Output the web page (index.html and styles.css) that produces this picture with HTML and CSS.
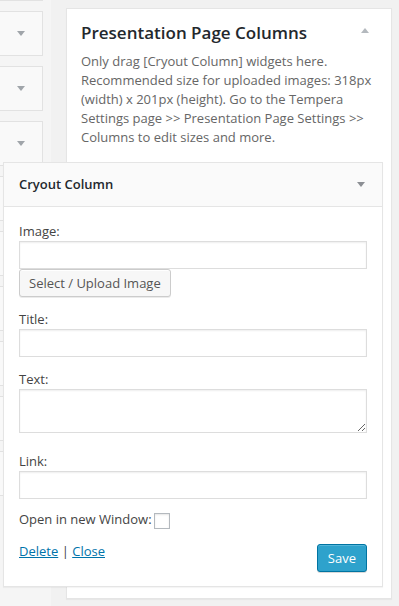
FILE: index.html
```html
<!DOCTYPE html>
<html>
<head>
<meta charset="utf-8">
<link rel="stylesheet" href="styles.css">
</head>
<body>
<div class="screen">
  <div class="left-col">
    <div class="side-box"><span class="arrow-down"></span></div>
    <div class="side-box"><span class="arrow-down"></span></div>
    <div class="side-box"><span class="arrow-down"></span></div>
    <div class="side-box"><span class="arrow-down"></span></div>
    <div class="side-box"></div>
    <div class="side-box"></div>
    <div class="side-box"></div>
    <div class="side-box"></div>
    <div class="side-box"></div>
    <div class="side-box"></div>
  </div>
  <div class="holder">
    <div class="holder-head">
      <h3 class="holder-title">Presentation Page Columns</h3>
      <span class="arrow-up"></span>
    </div>
    <p class="holder-desc">Only drag [Cryout Column] widgets here.<br>Recommended size for uploaded images: 318px<br>(width) x 201px (height). Go to the Tempera<br>Settings page &gt;&gt; Presentation Page Settings &gt;&gt;<br>Columns to edit sizes and more.</p>
  </div>

  <div class="widget">
    <div class="widget-top">
      <span class="widget-title">Cryout Column</span>
      <span class="arrow-down dark"></span>
    </div>
    <div class="widget-inside">
      <div class="field first">
        <label class="lbl">Image:</label>
        <input class="inp" type="text">
        <button class="btn" type="button">Select / Upload Image</button>
      </div>
      <div class="field">
        <label class="lbl">Title:</label>
        <input class="inp" type="text">
      </div>
      <div class="field">
        <label class="lbl">Text:</label>
        <textarea class="inp area"></textarea>
      </div>
      <div class="field link-field">
        <label class="lbl">Link:</label>
        <input class="inp" type="text">
      </div>
      <div class="check-row">
        <span class="lbl">Open in new Window:</span>
        <span class="checkbox"></span>
      </div>
      <div class="actions">
        <div class="links"><a href="#">Delete</a> <span class="sep">|</span> <a href="#">Close</a></div>
        <button class="btn-primary" type="button">Save</button>
      </div>
    </div>
  </div>
</div>
</body>
</html>
```
FILE: styles.css
```css
* { box-sizing: border-box; }
html, body { margin: 0; padding: 0; }
body {
  background: #f1f1f1;
  font-family: "Open Sans", "Liberation Sans", sans-serif;
  font-size: 13px;
  color: #444;
  width: 399px;
  height: 606px;
  overflow: hidden;
}
.screen {
  position: relative;
  display: flex;
  align-items: flex-start;
  width: 399px;
  height: 606px;
  overflow: hidden;
}
.left-col {
  width: 51px;
  flex: none;
  display: flex;
  flex-direction: column;
  gap: 10px;
  margin-top: -44px;
  padding-right: 8px;
  background: #f5f5f5;
  height: 650px;
  overflow: hidden;
}
.side-box {
  height: 45px;
  margin-left: -2px;
  background: #f9f9f9;
  border: 1px solid #e2e2e2;
  display: flex;
  align-items: center;
  justify-content: flex-end;
  padding-right: 17px;
  flex: none;
}
.arrow-down {
  width: 0;
  height: 0;
  border-left: 4px solid transparent;
  border-right: 4px solid transparent;
  border-top: 5px solid #a0a5aa;
  display: block;
}
.arrow-down.dark { border-top-color: #8c8f94; }
.arrow-up {
  width: 0;
  height: 0;
  border-left: 4px solid transparent;
  border-right: 4px solid transparent;
  border-bottom: 5px solid #b4b9be;
  display: block;
  margin-top: 7px;
}
.holder {
  margin-left: 15px;
  margin-top: 8px;
  width: 326px;
  height: 591px;
  background: #fff;
  border: 1px solid #e5e5e5;
  box-shadow: 0 1px 1px rgba(0,0,0,.04);
  padding: 12px 22px 0 14px;
  flex: none;
}
.holder-head {
  display: flex;
  justify-content: space-between;
  align-items: flex-start;
}
.holder-title {
  margin: 0;
  font-size: 17px;
  line-height: 24px;
  font-weight: 600;
  color: #23282d;
}
.holder-desc {
  margin: 7px 0 0;
  font-size: 13px;
  line-height: 19px;
  color: #666;
  white-space: nowrap;
}
.widget {
  position: absolute;
  left: 3px;
  top: 162px;
  width: 380px;
  background: #fff;
  border: 1px solid #e5e5e5;
  box-shadow: 0 1px 1px rgba(0,0,0,.04);
}
.widget-top {
  height: 44px;
  background: #fafafa;
  border-bottom: 1px solid #e5e5e5;
  display: flex;
  align-items: center;
  justify-content: space-between;
  padding: 0 17px 0 15px;
}
.widget-title {
  font-weight: 600;
  font-size: 13px;
  line-height: 19px;
  color: #23282d;
}
.widget-inside {
  padding: 14px 15px 14px;
}
.field {
  display: flex;
  flex-direction: column;
  align-items: flex-start;
  margin-top: 12px;
}
.field.first { margin-top: 0; }
.field.link-field { margin-top: 18px; }
.lbl {
  display: block;
  font-size: 13px;
  line-height: 20px;
  color: #444;
}
.inp {
  display: block;
  width: 348px;
  height: 28px;
  margin: 0;
  border: 1px solid #ddd;
  background: #fff;
  box-shadow: inset 0 1px 2px rgba(0,0,0,.07);
  font-family: inherit;
  font-size: 13px;
  padding: 3px 5px;
  outline: none;
}
.area {
  height: 44px;
  resize: vertical;
}
.btn {
  display: block;
  height: 28px;
  margin: 0;
  padding: 0 9px 1px;
  font-family: inherit;
  font-size: 13px;
  line-height: 26px;
  color: #555;
  background: #f7f7f7;
  border: 1px solid #ccc;
  border-radius: 3px;
  box-shadow: inset 0 1px 0 #fff, 0 1px 0 rgba(0,0,0,.08);
  white-space: nowrap;
}
.check-row {
  display: flex;
  align-items: flex-start;
  margin-top: 10px;
}
.checkbox {
  display: block;
  width: 16px;
  height: 16px;
  margin: 4px 0 0 2px;
  border: 1px solid #b4b9be;
  background: #fff;
  box-shadow: inset 0 1px 2px rgba(0,0,0,.1);
}
.actions {
  display: flex;
  justify-content: space-between;
  align-items: flex-start;
  margin-top: 12px;
}
.links {
  font-size: 13px;
  line-height: 20px;
  color: #444;
}
.links a {
  color: #0073aa;
  text-decoration: underline;
}
.sep { color: #444; }
.btn-primary {
  margin: 3px 0 0;
  height: 28px;
  padding: 0 10px 1px;
  font-family: inherit;
  font-size: 13px;
  line-height: 26px;
  color: #fff;
  background: #2ea2cc;
  border: 1px solid #0074a2;
  border-radius: 3px;
  box-shadow: inset 0 1px 0 rgba(120,200,230,.5), 0 1px 0 rgba(0,0,0,.15);
}
```
